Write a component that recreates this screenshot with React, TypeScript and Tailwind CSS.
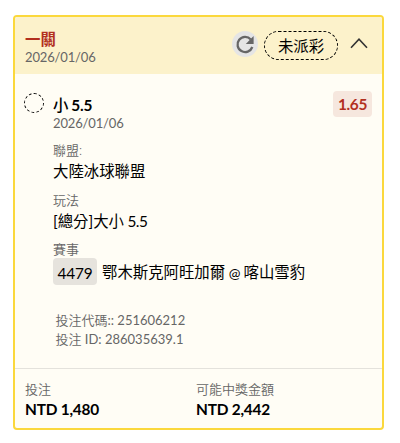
import type { ReactNode } from 'react'

interface FieldProps {
  label: string
  className?: string
  children: ReactNode
}

const bet = {
  type: '一關',
  date: '2026/01/06',
  status: '未派彩',
  side: '小',
  line: '5.5',
  odds: '1.65',
  league: '大陸冰球聯盟',
  market: '[總分]大小',
  eventNo: '4479',
  away: '鄂木斯克阿旺加爾',
  home: '喀山雪豹',
  code: '251606212',
  id: '286035639.1',
  stake: 'NTD 1,480',
  payout: 'NTD 2,442',
}

function RefreshIcon() {
  return (
    <svg width="26" height="26" viewBox="0 0 26 26" fill="none">
      <path d="M18.8 8.4A7.6 7.6 0 1 0 20.3 16" stroke="#666" strokeWidth="2.3" />
      <path d="M21.6 5V13H13.8Z" fill="#666" />
    </svg>
  )
}

function ChevronUp() {
  return (
    <svg width="18" height="12" viewBox="0 0 18 12" fill="none">
      <path d="M1 10.8L9 2.2L17 10.8" stroke="#333" strokeWidth="1.6" />
    </svg>
  )
}

function Field({ label, className = '', children }: FieldProps) {
  return (
    <div className={className}>
      <div className="text-[13px] leading-[18px] font-[350] text-[#666]">{label}</div>
      {children}
    </div>
  )
}

function App() {
  return (
    <div className="h-[443px] bg-white pt-[15px] pl-[13px] font-['Lato','Noto_Sans_CJK_TC',sans-serif] text-[15.4px] leading-[22px] text-black">
      <div className="flex h-[415px] w-[371px] flex-col rounded-[4px] border-2 border-[#fbd83c] bg-[#fffdf5]">
        {/* 標題列 */}
        <div className="flex h-[57px] shrink-0 rounded-t-[2px] bg-[#fcf2cb] pt-[13px] pl-[10px]">
          <div className="w-[207px]">
            <div className="h-[18px] font-bold leading-[19px] text-[#b2301f]">{bet.type}</div>
            <div className="text-[13px] leading-[18px] tracking-[-0.15px] text-[#666]">{bet.date}</div>
          </div>
          <button className="mt-[1px] flex size-[26px] items-center justify-center rounded-full bg-[#e5e5e5]">
            <RefreshIcon />
          </button>
          <div className="ml-[6px] mt-[1px] flex h-[29px] w-[74px] items-center justify-center rounded-full border border-dashed border-black">
            {bet.status}
          </div>
          <button className="mt-[7px] ml-[12px] h-[12px]">
            <ChevronUp />
          </button>
        </div>

        {/* 注單內容 */}
        <div className="flex h-[294px] shrink-0 pt-[19px] pr-[10px] pl-[9px]">
          <div className="size-[20px] shrink-0 rounded-full border border-dashed border-black" />
          <div className="ml-[9px] flex-1">
            <div className="mt-[1px] font-medium">
              {bet.side} <span className="-ml-[1px] font-bold tracking-[-0.2px]">{bet.line}</span>
            </div>
            <div className="-mt-[1px] text-[13px] leading-[16px] tracking-[-0.15px] text-[#666]">{bet.date}</div>
            <Field label="聯盟:" className="mt-[10px]">
              <div className="mt-[1px]">{bet.league}</div>
            </Field>
            <Field label="玩法" className="mt-[9px]">
              <div className="mt-[1px]">
                {bet.market}
                <span className="tracking-[-0.5px]"> {bet.line}</span>
              </div>
            </Field>
            <Field label="賽事" className="mt-[8px]">
              <div className="flex items-center whitespace-nowrap">
                <span className="flex h-[27px] w-[44px] items-center justify-center rounded-[4px] bg-[#e6e3dd] pt-[2px] tracking-[-0.2px]">
                  {bet.eventNo}
                </span>
                <span className="ml-[5px] pt-[2px]">
                  {bet.away}
                  <span className="tracking-[-0.4px]"> <span className="text-[14px]">@</span> </span>
                  {bet.home}
                </span>
              </div>
            </Field>
            <div className="mt-[26px] ml-[2.5px] text-[13px] leading-[19px] text-[#666]">
              <div>
                <span className="font-[350]">投注代碼</span>:: {bet.code}
              </div>
              <div>
                <span className="font-[350]">投注</span> ID: {bet.id}
              </div>
            </div>
          </div>
          <div className="-mt-[2px] flex h-[26px] w-[39px] shrink-0 items-center justify-center rounded-[4px] bg-[#f6e7de] font-bold tracking-[-0.3px] text-[#b2301f]">
            {bet.odds}
          </div>
        </div>

        {/* 金額 */}
        <div className="flex flex-1 border-t border-[#e4e2dc] pt-[11px] pl-[10px]">
          <Field label="投注" className="w-[171px]">
            <div className="font-bold tracking-[-0.2px]">{bet.stake}</div>
          </Field>
          <Field label="可能中獎金額">
            <div className="font-bold tracking-[-0.2px]">{bet.payout}</div>
          </Field>
        </div>
      </div>
    </div>
  )
}

export default App
